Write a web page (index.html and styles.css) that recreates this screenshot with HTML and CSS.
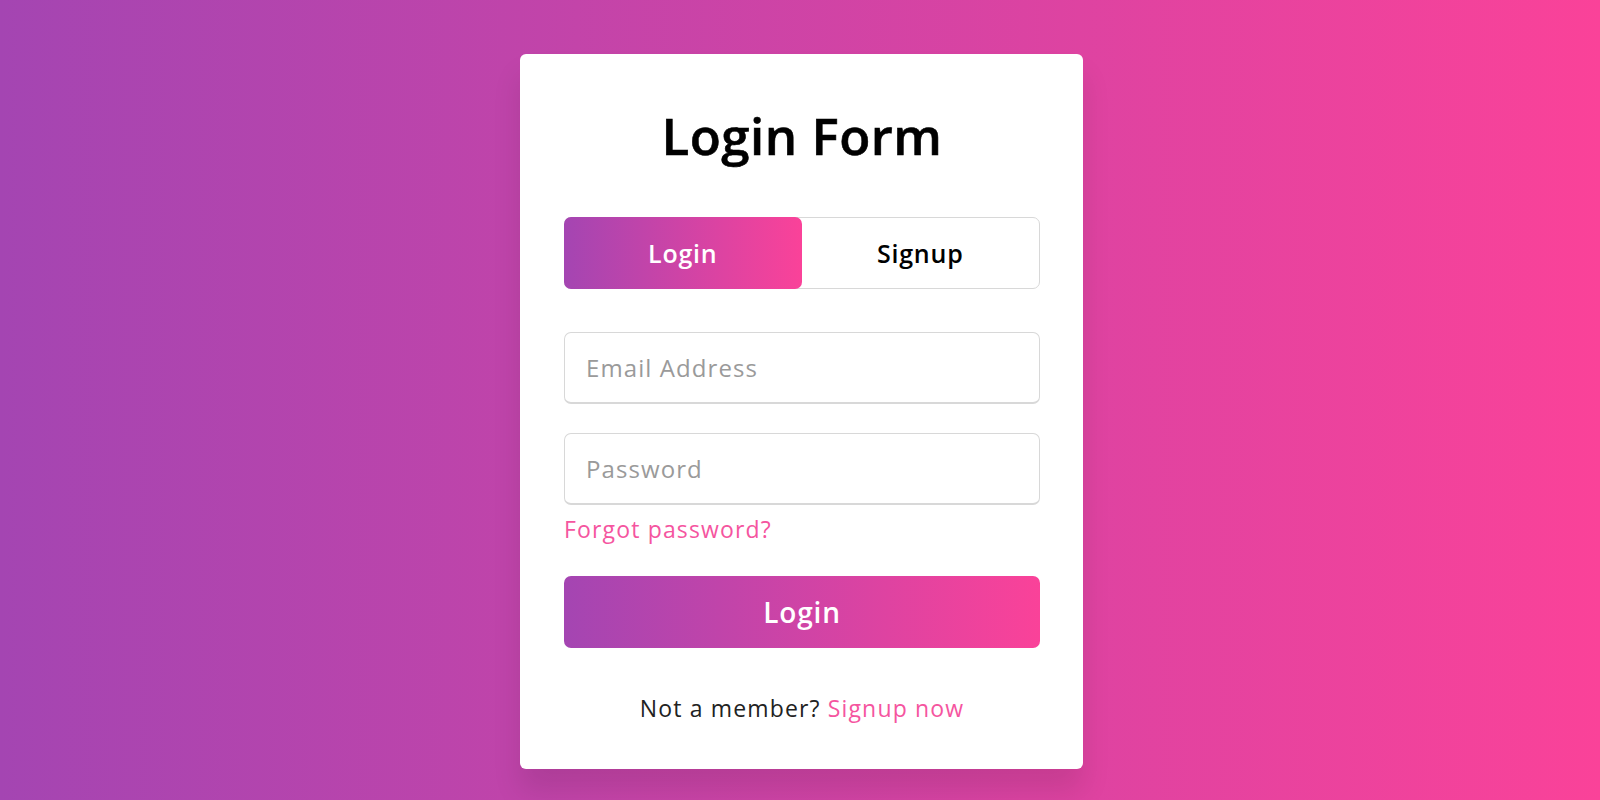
FILE: index.html
```html
<!DOCTYPE html>
<html lang="en">
<head>
<meta charset="utf-8">
<title>Login Form</title>
<link rel="stylesheet" href="styles.css">
</head>
<body>
  <div class="wrapper">
    <h1 class="title">Login Form</h1>
    <div class="slide-controls">
      <div class="slide login">Login</div>
      <div class="slide signup">Signup</div>
    </div>
    <form class="form">
      <div class="field"><input type="text" placeholder="Email Address"></div>
      <div class="field"><input type="password" placeholder="Password"></div>
      <div class="pass-link"><a href="#">Forgot password?</a></div>
      <div class="field"><button type="button" class="btn">Login</button></div>
      <div class="signup-link">Not a member? <a href="#">Signup now</a></div>
    </form>
  </div>
</body>
</html>
```

FILE: styles.css
```css
* {
  box-sizing: border-box;
}
html, body {
  height: 100%;
}
body {
  margin: 0;
  padding: 54px 0 0 3px;
  display: flex;
  flex-direction: column;
  align-items: center;
  background: linear-gradient(to right, #a445b2, #fa4299);
  font-family: "Open Sans", "Noto Sans", sans-serif;
}
.wrapper {
  width: 563px;
  background: #fff;
  padding: 43px 43px 43px 44px;
  border-radius: 6px;
  box-shadow: 0 22px 29px rgba(0, 0, 0, 0.1);
}
.title {
  margin: 0;
  height: 76px;
  line-height: 76px;
  font-size: 51px;
  font-weight: 600;
  letter-spacing: 0.01em;
  -webkit-text-stroke: 0.6px #000;
  text-align: center;
  color: #000;
}
.slide-controls {
  display: flex;
  height: 72px;
  margin: 44px 0 14px 0;
  border: 1px solid #d8d8d8;
  border-radius: 7px;
}
.slide {
  flex: 1;
  text-align: center;
  font-size: 25px;
  font-weight: 600;
  letter-spacing: 0.03em;
  line-height: 70px;
  color: #000;
}
.slide.login {
  margin: -1px 0 -1px -1px;
  line-height: 72px;
  color: #fff;
  border-radius: 7px;
  background: linear-gradient(to right, #a445b2, #fa4299);
}
.form {
  display: flex;
  flex-direction: column;
}
.field {
  height: 72px;
  margin-top: 29px;
}
.field input {
  display: block;
  width: 100%;
  height: 100%;
  outline: none;
  padding-left: 21px;
  border: 1px solid #d8d8d8;
  border-bottom-width: 2px;
  border-radius: 7px;
  font-family: inherit;
  font-size: 24px;
  letter-spacing: 0.045em;
  color: #333;
}
.field input::placeholder {
  color: #9a9a9a;
}
.pass-link {
  margin-top: 7px;
  height: 35px;
  line-height: 35px;
  font-size: 23px;
  letter-spacing: 0.05em;
}
.pass-link a,
.signup-link a {
  color: #f5559f;
  text-decoration: none;
}
.btn {
  display: block;
  width: 100%;
  height: 100%;
  border: none;
  border-radius: 7px;
  background: linear-gradient(to right, #a445b2, #fa4299);
  color: #fff;
  font-family: inherit;
  font-size: 28px;
  font-weight: 600;
  letter-spacing: 0.03em;
  cursor: pointer;
}
.signup-link {
  margin-top: 43px;
  height: 35px;
  line-height: 35px;
  text-align: center;
  font-size: 23px;
  letter-spacing: 0.05em;
  color: #222;
}
```
